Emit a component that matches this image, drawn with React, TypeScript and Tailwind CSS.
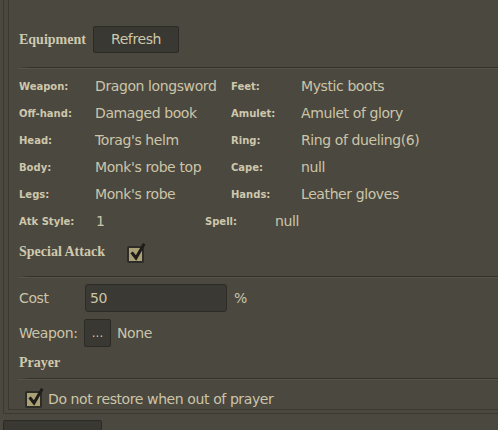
import React from "react";

const sans = { fontFamily: '"DejaVu Sans", sans-serif' };
const serif = { fontFamily: '"Liberation Serif", serif' };

function Sep() {
  return (
    <div className="flex flex-col">
      <div className="flex h-px">
        <div className="w-[10px] h-px bg-gradient-to-r from-transparent to-[#34322c]" />
        <div className="flex-1 h-px bg-[#34322c]" />
      </div>
      <div className="h-px bg-[#57534a]" />
    </div>
  );
}

function Check() {
  return (
    <div className="relative w-[17px] h-[17px] bg-[#aba176] border-2 border-[#2e2c27] rounded-[2px]">
      <svg className="absolute left-[1px] top-[-5px]" width="16" height="18" viewBox="0 0 16 18">
        <path d="M2.5 10.5 L6 15 L13.5 2" fill="none" stroke="#1e1d19" strokeWidth="3" strokeLinecap="square" />
      </svg>
    </div>
  );
}

function Label({ children, w }: { children: React.ReactNode; w: string }) {
  return (
    <div className={`${w} text-[10px] font-bold text-[#cdc7ac] shrink-0`} style={sans}>
      {children}
    </div>
  );
}

function Val({ children, w }: { children: React.ReactNode; w?: string }) {
  return (
    <div
      className={`${w ?? ""} text-[14px] tracking-[-0.4px] text-[#cbc5a8] shrink-0 whitespace-nowrap`}
      style={sans}
    >
      {children}
    </div>
  );
}

const rows: [string, string, string, string][] = [
  ["Weapon:", "Dragon longsword", "Feet:", "Mystic boots"],
  ["Off-hand:", "Damaged book", "Amulet:", "Amulet of glory"],
  ["Head:", "Torag's helm", "Ring:", "Ring of dueling(6)"],
  ["Body:", "Monk's robe top", "Cape:", "null"],
  ["Legs:", "Monk's robe", "Hands:", "Leather gloves"],
];

export default function App() {
  return (
    <div className="w-[498px] h-[430px] bg-[#4b4840] overflow-hidden flex flex-col">
      <div className="h-[414px] ml-[3px] border-l border-b border-[#3b3932] shrink-0 flex flex-col">
        <div className="h-[410px] ml-[4px] border-l border-b border-[#3b3932] overflow-hidden pl-[10px] pt-[26px]">
          <div className="flex items-center">
            <div className="text-[14px] font-bold text-[#cfc9ae] w-[74px]" style={serif}>
              Equipment
            </div>
            <div
              className="w-[86px] h-[27px] bg-[#3a3832] border border-[#2b2a25] rounded-[2px] flex items-center justify-center text-[14px] tracking-[-0.4px] text-[#cdc7aa]"
              style={sans}
            >
              Refresh
            </div>
          </div>
          <div className="mt-[14px]">
            <Sep />
          </div>
          <div className="mt-[4px] flex flex-col">
            {rows.map((r) => (
              <div key={r[0]} className="h-[27px] flex items-center">
                <Label w="w-[76px]">{r[0]}</Label>
                <Val w="w-[136px]">{r[1]}</Val>
                <Label w="w-[70px]">{r[2]}</Label>
                <Val>{r[3]}</Val>
              </div>
            ))}
            <div className="h-[27px] flex items-center">
              <Label w="w-[76px]">Atk Style:</Label>
              <Val w="w-[110px]">
                <span className="pl-[1px]">1</span>
              </Val>
              <Label w="w-[70px]">Spell:</Label>
              <Val>null</Val>
            </div>
          </div>
          <div className="h-[32px] flex items-center">
            <div className="text-[14px] font-bold text-[#cfc9ae] w-[108px]" style={serif}>
              Special Attack
            </div>
            <div className="mt-[6px]">
              <Check />
            </div>
          </div>
          <div className="mt-[9px]">
            <Sep />
          </div>
          <div className="mt-[6px] h-[28px] flex items-center">
            <Val w="w-[66px]">Cost</Val>
            <div
              className="w-[142px] h-[28px] bg-[#3b3933] border border-[#2d2b26] rounded-[3px] flex items-center pl-[4px] text-[14px] tracking-[-0.4px] text-[#cbc5a8]"
              style={sans}
            >
              50
            </div>
            <div className="ml-[7px] text-[14px] text-[#cbc5a8]" style={sans}>
              %
            </div>
          </div>
          <div className="mt-[7px] h-[28px] flex items-center">
            <Val w="w-[65px]">Weapon:</Val>
            <div
              className="w-[27px] h-[28px] bg-[#3a3832] border border-[#2b2a25] rounded-[2px] flex items-center justify-center text-[12px] text-[#cdc7aa]"
              style={sans}
            >
              ...
            </div>
            <Val w="ml-[6px]">None</Val>
          </div>
          <div className="h-[30px] flex items-center">
            <div className="text-[14px] font-bold text-[#cfc9ae]" style={serif}>
              Prayer
            </div>
          </div>
          <div className="mt-[1px]">
            <Sep />
          </div>
          <div className="mt-[9px] flex items-center pl-[6px]">
            <Check />
            <Val w="ml-[6px]">Do not restore when out of prayer</Val>
          </div>
        </div>
      </div>
      <div className="mt-[6px] ml-[3px] w-[99px] h-[20px] bg-[#3a3832] border border-[#2b2a25] rounded-[2px] shrink-0" />
    </div>
  );
}
